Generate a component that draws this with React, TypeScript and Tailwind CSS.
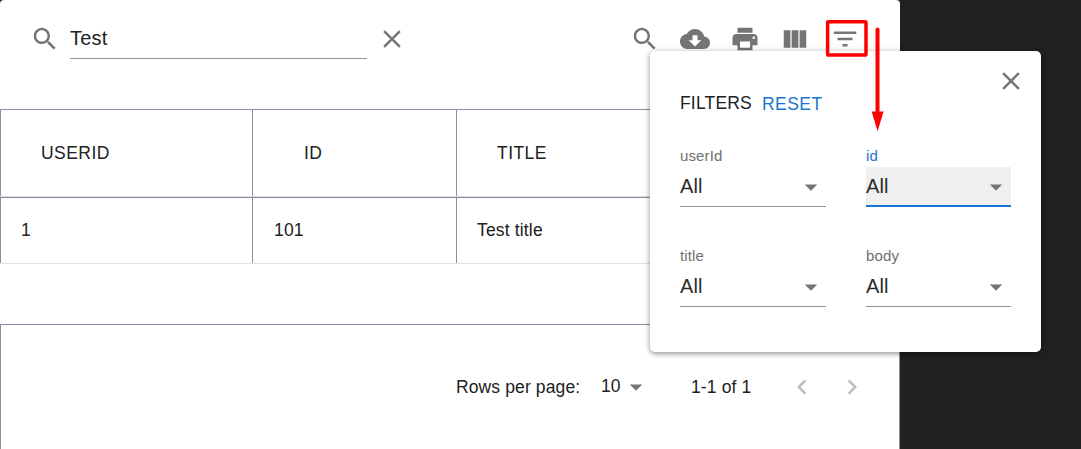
import React from "react";

const PATHS = {
  search:
    "M15.5 14h-.79l-.28-.27C15.41 12.59 16 11.11 16 9.5 16 5.91 13.09 3 9.5 3S3 5.91 3 9.5 5.91 16 9.5 16c1.61 0 3.09-.59 4.23-1.57l.27.28v.79l5 4.99L20.49 19l-4.99-5zm-6 0C7.01 14 5 11.99 5 9.5S7.01 5 9.5 5 14 7.01 14 9.5 11.99 14 9.5 14z",
  close:
    "M19 6.41L17.59 5 12 10.59 6.41 5 5 6.41 10.59 12 5 17.59 6.41 19 12 13.41 17.59 19 19 17.59 13.41 12z",
  cloud:
    "M19.35 10.04C18.67 6.59 15.64 4 12 4 9.11 4 6.6 5.64 5.35 8.04 2.34 8.36 0 10.91 0 14c0 3.31 2.69 6 6 6h13c2.76 0 5-2.24 5-5 0-2.64-2.05-4.78-4.65-4.96zM17 13l-5 5-5-5h3V9h4v4h3z",
  print:
    "M19 8H5c-1.66 0-3 1.34-3 3v6h4v4h12v-4h4v-6c0-1.66-1.34-3-3-3zm-3 11H8v-5h8v5zm3-7c-.55 0-1-.45-1-1s.45-1 1-1 1 .45 1 1-.45 1-1 1zm-1-9H6v4h12V3z",
  columns: "M14.67 5v14H9.33V5h5.34zm1 14H21V5h-5.33v14zm-7.34 0V5H3v14h5.33z",
  filter: "M10 18h4v-2h-4v2zM3 6v2h18V6H3zm3 7h12v-2H6v2z",
  dropdown: "M7 10l5 5 5-5z",
  prev: "M15.41 7.41L14 6l-6 6 6 6 1.41-1.41L10.83 12z",
  next: "M10 6L8.59 7.41 13.17 12l-4.58 4.59L10 18l6-6z",
};

function Icon({
  name,
  className = "",
  color = "fill-[#757575]",
}: {
  name: keyof typeof PATHS;
  className?: string;
  color?: string;
}) {
  return (
    <svg viewBox="0 0 24 24" className={`size-[30px] shrink-0 ${color} ${className}`}>
      <path d={PATHS[name]} />
    </svg>
  );
}

function Toolbar() {
  return (
    <header className="flex h-[109px] items-start pt-6 pl-[30px]">
      <Icon name="search" />
      <div className="ml-2.5 flex h-[35px] w-[297px] items-start border-b border-[#949494] text-[20px] leading-[28px] tracking-[0.19px]">
        Test
      </div>
      <Icon name="close" className="ml-[10px]" />
      <div className="ml-auto flex gap-5 pr-10">
        <Icon name="search" />
        <Icon name="cloud" />
        <Icon name="print" />
        <Icon name="columns" />
        <Icon name="filter" />
      </div>
    </header>
  );
}

const COLUMNS = "grid grid-cols-[252px_204px_444px]";

function Table() {
  const headers = ["USERID", "ID", "TITLE"];
  const cells = ["1", "101", "Test title"];
  return (
    <div>
      <div className={`${COLUMNS} h-[88px] border-t border-b border-t-[#8a8ba6] border-b-[#dcdce0]`}>
        {headers.map((label, i) => (
          <div
            key={label}
            className={`flex items-center border-l border-[#8a8ba6] tracking-[0.46px] ${i === 1 ? "pl-[51px]" : "pl-10"}`}
          >
            {label}
          </div>
        ))}
      </div>
      <div className={`${COLUMNS} h-[67px] border-t border-b border-t-[#8a8ba6] border-b-[#e0e0e0]`}>
        {cells.map((value, i) => (
          <div
            key={value}
            className={`flex items-center border-l border-[#8a8ba6] tracking-[0.16px] ${i === 1 ? "pl-[21px]" : "pl-5"}`}
          >
            {value}
          </div>
        ))}
      </div>
    </div>
  );
}

function Pagination() {
  return (
    <footer className="mt-[60px] flex h-[125px] items-center border-x border-t border-[#8a8ba6] pl-[455px] tracking-[0.12px]">
      <span className="w-[145px] whitespace-nowrap">Rows per page:</span>
      <span className="-mt-0.5 w-5">10</span>
      <Icon name="dropdown" />
      <span className="ml-10 w-[96px] whitespace-nowrap">1-1 of 1</span>
      <Icon name="prev" color="fill-[#bdbdbd]" />
      <Icon name="next" color="fill-[#bdbdbd]" className="ml-5" />
    </footer>
  );
}

function Filter({ label, active = false }: { label: string; active?: boolean }) {
  return (
    <div className="h-[100px]">
      <div className={`h-5 text-[15px] leading-[17px] tracking-[0.14px] ${active ? "text-[#1976d2]" : "text-[#707070]"}`}>
        {label}
      </div>
      <div
        className={`flex h-10 justify-between ${active ? "border-b-2 border-[#1976d2] bg-[#f0f0f0]" : "border-b border-[#949494]"}`}
      >
        <span className="text-[20px] leading-[38px] tracking-[0.15px] text-[#2b2b2b]">All</span>
        <Icon name="dropdown" className="mt-[5px]" />
      </div>
    </div>
  );
}

function FilterPopup() {
  return (
    <section className="absolute top-[51px] left-[650px] h-[301px] w-[391px] rounded-[5px] bg-white px-[30px] shadow-[0_2px_5px_rgba(0,0,0,0.35),0_0_8px_rgba(0,0,0,0.12)]">
      <div className="flex h-[96px] items-start">
        <h2 className="mt-[39px] w-[82px] leading-[26px] tracking-[0.18px]">FILTERS</h2>
        <button className="mt-[40px] leading-[26px] tracking-[0.46px] text-[#1976d2]">RESET</button>
        <Icon name="close" className="mt-[15px] -mr-[15px] ml-auto" />
      </div>
      <div className="grid grid-cols-[146px_145px] gap-x-10">
        <Filter label="userId" />
        <Filter label="id" active />
        <Filter label="title" />
        <Filter label="body" />
      </div>
    </section>
  );
}

function Annotation() {
  return (
    <svg className="absolute top-[15px] left-[820px] h-[120px] w-[70px]" viewBox="0 0 70 120" fill="none" stroke="#ff0000">
      <rect x="7.6" y="6.8" width="38.4" height="33.3" rx="0.8" strokeWidth="3.5" />
      <path d="M57.5 14.5V100" strokeWidth="4" strokeLinecap="round" />
      <path d="M51.6 96.6h12L57.6 116.3z" fill="#ff0000" stroke="none" />
    </svg>
  );
}

export default function App() {
  return (
    <main className="relative h-[449px] w-[1081px] overflow-hidden bg-[#212121] font-['Liberation_Sans',Arial,sans-serif] text-[17.5px] text-[#212121]">
      <div className="h-full w-[900px] rounded-t-[4px] bg-white">
        <Toolbar />
        <Table />
        <Pagination />
      </div>
      <FilterPopup />
      <Annotation />
    </main>
  );
}
